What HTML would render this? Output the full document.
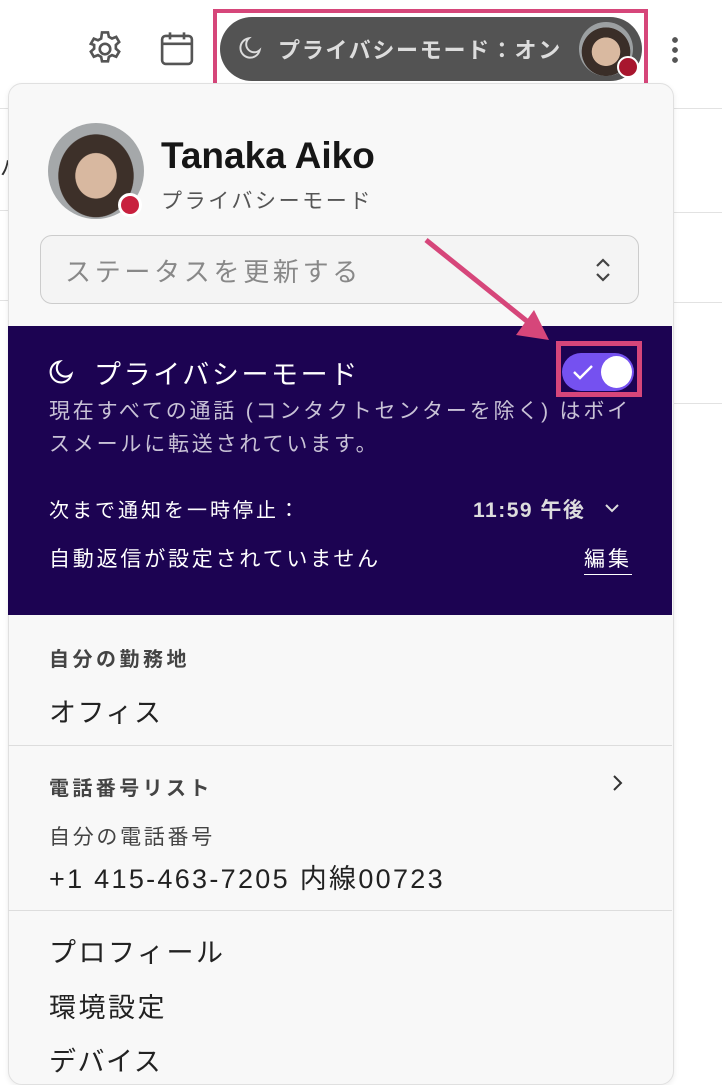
<!DOCTYPE html>
<html><head><meta charset="utf-8"><style>
body{margin:0;width:722px;height:1069px;overflow:hidden;background:#fff;font-family:"Liberation Sans","Noto Sans CJK JP",sans-serif;position:relative;color:#1a1a1a}
.a{position:absolute;white-space:nowrap}
.hl{position:absolute;height:1px;background:#e2e2e2}
</style></head><body>
<div class="hl" style="left:0;width:10px;top:108px"></div>
<div class="hl" style="left:0;width:10px;top:210px"></div>
<div class="hl" style="left:0;width:10px;top:300px"></div>
<div class="hl" style="left:672px;width:50px;top:108px"></div>
<div class="hl" style="left:672px;width:50px;top:212px"></div>
<div class="hl" style="left:672px;width:50px;top:302px"></div>
<div class="hl" style="left:672px;width:50px;top:403px"></div>
<div class="a" style="left:0;top:150px;font-size:22px;color:#333">パ</div>

<svg class="a" style="left:84px;top:28px" width="42" height="42" viewBox="0 0 24 24" fill="none" stroke="#555" stroke-width="1.5"><path d="M10.3 2.5h3.4l.5 2.5 1.8 1 2.4-.9 1.7 2.9-1.9 1.7v2.1l1.9 1.7-1.7 2.9-2.4-.9-1.8 1-.5 2.5h-3.4l-.5-2.5-1.8-1-2.4.9-1.7-2.9 1.9-1.7v-2.1L3.9 9l1.7-2.9 2.4.9 1.8-1z"/><circle cx="12" cy="12" r="3"/></svg>
<svg class="a" style="left:156px;top:28px" width="42" height="42" viewBox="0 0 24 24" fill="none" stroke="#555" stroke-width="1.5"><rect x="3.5" y="4.5" width="17" height="16" rx="2"/><path d="M3.5 9h17M8 2.5v4M16 2.5v4"/></svg>

<div class="a" style="left:213px;top:9px;width:435px;height:79px;border:4px solid #d6467a;box-sizing:border-box"></div>
<div class="a" style="left:220px;top:17px;width:422px;height:64px;border-radius:32px;background:#535353"></div>
<svg class="a" style="left:238px;top:35px" width="26" height="26" viewBox="0 0 24 24" fill="none" stroke="#ddd" stroke-width="1.8"><path d="M10 3a9 9 0 1 0 10 11A7 7 0 0 1 10 3z"/></svg>
<div class="a" style="left:278px;top:33px;font-size:22px;color:#ddd;font-weight:bold;letter-spacing:1.7px">プライバシーモード：オン</div>
<div class="a" style="left:579px;top:22px;width:54px;height:54px;border-radius:50%;background:radial-gradient(circle at 50% 55%,#d9b9a0 0 35%,#3a2e28 36% 60%,#9ca0a2 61%)"></div>
<div class="a" style="left:617px;top:56px;width:18px;height:18px;border-radius:50%;background:#a8162e;border:2px solid #fff"></div>
<div class="a" style="left:672px;top:35px;width:6px;height:30px;background:radial-gradient(circle,#555 2.7px,transparent 3px) 0 0/6px 10px"></div>

<div class="a" style="left:8px;top:83px;width:664px;height:1000px;background:#f8f8f8;border-radius:14px;border:1px solid #e0e0e0;box-shadow:0 2px 6px rgba(0,0,0,.08)"></div>

<div class="a" style="left:48px;top:123px;width:96px;height:96px;border-radius:50%;background:radial-gradient(ellipse at 50% 55%,#d8b8a0 0 30%,#3d3029 31% 55%,#a5a8aa 56%)"></div>
<div class="a" style="left:118px;top:193px;width:18px;height:18px;border-radius:50%;background:#c8203e;border:3px solid #fff"></div>
<div class="a" style="left:161px;top:135px;font-size:37px;font-weight:bold;color:#161616">Tanaka Aiko</div>
<div class="a" style="left:161px;top:185px;font-size:21px;color:#555;letter-spacing:2.6px">プライバシーモード</div>

<div class="a" style="left:40px;top:235px;width:599px;height:69px;border:1px solid #ccc;border-radius:12px;background:#f4f4f4;box-sizing:border-box"></div>
<div class="a" style="left:65px;top:252px;font-size:26px;color:#888;letter-spacing:3.7px">ステータスを更新する</div>
<svg class="a" style="left:590px;top:254px" width="26" height="32" viewBox="0 0 26 32" fill="none" stroke="#444" stroke-width="2.2"><path d="M7 12l6-6 6 6M7 20l6 6 6-6"/></svg>

<div class="a" style="left:8px;top:326px;width:664px;height:289px;background:#1c0352"></div>
<svg class="a" style="left:48px;top:358px" width="28" height="28" viewBox="0 0 24 24" fill="none" stroke="#fff" stroke-width="1.8"><path d="M10 3a9 9 0 1 0 10 11A7 7 0 0 1 10 3z"/></svg>
<div class="a" style="left:94px;top:353px;font-size:27px;color:#fff;letter-spacing:2.6px">プライバシーモード</div>
<div class="a" style="left:556px;top:341px;width:86px;height:56px;border:5px solid #d6467a;box-sizing:border-box"></div>
<div class="a" style="left:562px;top:353px;width:72px;height:38px;border-radius:19px;background:#7551f0"></div>
<div class="a" style="left:601px;top:356px;width:31px;height:32px;border-radius:50%;background:#fff"></div>
<svg class="a" style="left:571px;top:363px" width="24" height="18" viewBox="0 0 24 18" fill="none" stroke="#fff" stroke-width="2.4"><path d="M3 9l6 6L21 3"/></svg>
<div class="a" style="left:49px;top:395px;font-size:21px;line-height:33px;color:#c8c2d6;letter-spacing:2.8px">現在すべての通話 (コンタクトセンターを除く) はボイ<br>スメールに転送されています。</div>
<div class="a" style="left:49px;top:494px;font-size:20px;color:#fff;letter-spacing:3px">次まで通知を一時停止：</div>
<div class="a" style="left:473px;top:494px;font-size:21px;color:#ddd;letter-spacing:1.5px;font-weight:bold">11:59 午後</div>
<svg class="a" style="left:602px;top:500px" width="20" height="16" viewBox="0 0 20 16" fill="none" stroke="#ddd" stroke-width="2"><path d="M4 5l6 6 6-6"/></svg>
<div class="a" style="left:49px;top:543px;font-size:21px;color:#fff;letter-spacing:2.8px">自動返信が設定されていません</div>
<div class="a" style="left:584px;top:543px;font-size:21px;color:#fff;border-bottom:1.5px solid #fff;padding-bottom:1px;letter-spacing:3px">編集</div>

<div class="a" style="left:49px;top:643px;font-size:20px;font-weight:bold;color:#444;letter-spacing:3.5px">自分の勤務地</div>
<div class="a" style="left:49px;top:691px;font-size:27px;color:#222;letter-spacing:1.5px">オフィス</div>
<div class="hl" style="left:8px;width:664px;top:745px;background:#ddd"></div>
<div class="a" style="left:49px;top:772px;font-size:20px;font-weight:bold;color:#444;letter-spacing:3.4px">電話番号リスト</div>
<svg class="a" style="left:608px;top:772px" width="18" height="22" viewBox="0 0 18 22" fill="none" stroke="#333" stroke-width="2"><path d="M6 4l7 7-7 7"/></svg>
<div class="a" style="left:49px;top:821px;font-size:21px;color:#444;letter-spacing:2.7px">自分の電話番号</div>
<div class="a" style="left:49px;top:857px;font-size:27px;color:#222;letter-spacing:2.3px">+1 415-463-7205 内線00723</div>
<div class="hl" style="left:8px;width:664px;top:910px;background:#ddd"></div>
<div class="a" style="left:49px;top:931px;font-size:27px;color:#222;letter-spacing:2.5px">プロフィール</div>
<div class="a" style="left:49px;top:986px;font-size:27px;color:#222;letter-spacing:2.5px">環境設定</div>
<div class="a" style="left:49px;top:1040px;font-size:27px;color:#222;letter-spacing:1.5px">デバイス</div>

<svg class="a" style="left:0;top:0" width="722" height="1069"><line x1="426" y1="240" x2="528" y2="322" stroke="#d6467a" stroke-width="5"/><polygon points="549,340 516,335 534,310" fill="#d6467a"/></svg>
</body></html>
